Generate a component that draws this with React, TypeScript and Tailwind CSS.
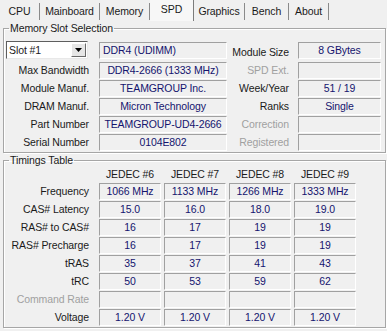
import React from "react";

const tabs = [
  { name: "CPU", w: "w-[40px]" },
  { name: "Mainboard", w: "w-[60px]" },
  { name: "Memory", w: "w-[50px]" },
  { name: "SPD", w: "w-[44px]", active: true },
  { name: "Graphics", w: "w-[51px]" },
  { name: "Bench", w: "w-[44px]" },
  { name: "About", w: "w-[40px]" },
];

const slotRows = [
  ["Max Bandwidth", "DDR4-2666 (1333 MHz)", "SPD Ext.", ""],
  ["Module Manuf.", "TEAMGROUP Inc.", "Week/Year", "51 / 19"],
  ["DRAM Manuf.", "Micron Technology", "Ranks", "Single"],
  ["Part Number", "TEAMGROUP-UD4-2666", "Correction", ""],
  ["Serial Number", "0104E802", "Registered", ""],
];

const dimmed = ["SPD Ext.", "Correction", "Registered", "Command Rate"];

const timings: [string, string[]][] = [
  ["Frequency", ["1066 MHz", "1133 MHz", "1266 MHz", "1333 MHz"]],
  ["CAS# Latency", ["15.0", "16.0", "18.0", "19.0"]],
  ["RAS# to CAS#", ["16", "17", "19", "19"]],
  ["RAS# Precharge", ["16", "17", "19", "19"]],
  ["tRAS", ["35", "37", "41", "43"]],
  ["tRC", ["50", "53", "59", "62"]],
  ["Command Rate", ["", "", "", ""]],
  ["Voltage", ["1.20 V", "1.20 V", "1.20 V", "1.20 V"]],
];

const Field = ({ value, w }: { value: string; w: string }) => (
  <div
    className={`${w} h-[17px] flex items-center justify-center whitespace-nowrap border border-t-[#a0a0a0] border-l-[#a0a0a0] border-b-[#ffffff] border-r-[#ffffff] bg-[#f0f0f0] text-[#14146e] leading-none`}
  >
    {value}
  </div>
);

const Label = ({ text, w }: { text: string; w: string }) => (
  <div
    className={`${w} text-right whitespace-nowrap leading-none ${
      dimmed.includes(text) ? "text-[#a0a0a0]" : "text-[#1a1a1a]"
    }`}
  >
    {text}
  </div>
);

export default function App() {
  return (
    <div
      className="w-[387px] h-[331px] bg-[#f0f0f0] text-[10.5px] tracking-[-0.1px] overflow-hidden"
      style={{ fontFamily: '"Liberation Sans", Arial, sans-serif' }}
    >
      {/* tab strip */}
      <div className="h-[20px] flex items-end">
        {tabs.map((t) =>
          t.active ? (
            <div
              key={t.name}
              className={`${t.w} h-[21px] -mb-px flex items-center justify-center bg-[#f7f7f7] border-r border-r-[#7c7c7c] text-[#1a1a1a] pb-[2px]`}
            >
              {t.name}
            </div>
          ) : (
            <div
              key={t.name}
              className={`${t.w} h-[17px] flex items-center justify-center border-r border-r-[#8a8a8a] text-[#1a1a1a]`}
            >
              {t.name}
            </div>
          )
        )}
      </div>

      {/* Memory Slot Selection */}
      <fieldset className="ml-[3px] mt-[2px] w-[383px] h-[131px] border border-[#a6a6a6] shadow-[inset_1px_1px_0_#ffffff,1px_1px_0_#ffffff]">
        <legend className="ml-[5px] px-px leading-[13px] text-[#1a1a1a]">
          Memory Slot Selection
        </legend>
        <div className="flex items-center mt-[6px] h-[18px]">
          <div className="ml-[2px] w-[82px] h-[18px] flex items-center bg-white border border-t-[#5e5e5e] border-l-[#5e5e5e] border-b-[#e8e8e8] border-r-[#e8e8e8] text-[#1a1a1a]">
            <span className="pl-[2px] flex-1 leading-none">Slot #1</span>
            <div className="w-[15px] h-[14px] mr-px flex items-center justify-center bg-[#e6e6e6] border border-t-[#ffffff] border-l-[#ffffff] border-b-[#6a6a6a] border-r-[#6a6a6a]">
              <svg width="7" height="4" viewBox="0 0 7 4">
                <path d="M0 0h7L3.5 4z" fill="#000" />
              </svg>
            </div>
          </div>
          <div className="ml-[11px]">
            <div className="w-[128px] h-[17px] flex items-center pl-[3px] whitespace-nowrap border border-t-[#a0a0a0] border-l-[#a0a0a0] border-b-[#ffffff] border-r-[#ffffff] text-[#14146e] leading-none">
              DDR4 (UDIMM)
            </div>
          </div>
          <div className="w-[62px] text-right leading-none text-[#1a1a1a] pt-[4px]">
            Module Size
          </div>
          <div className="ml-[9px]">
            <Field value="8 GBytes" w="w-[83px]" />
          </div>
        </div>
        <div className="mt-[3px] flex flex-col gap-px">
          {slotRows.map(([l, v, l2, v2]) => (
            <div key={l} className="flex items-center h-[17px]">
              <Label text={l} w="w-[85px]" />
              <div className="ml-[10px]">
                <Field value={v} w="w-[128px]" />
              </div>
              <Label text={l2} w="w-[62px]" />
              <div className="ml-[9px]">
                <Field value={v2} w="w-[83px]" />
              </div>
            </div>
          ))}
        </div>
      </fieldset>

      {/* Timings Table */}
      <fieldset className="ml-[3px] mt-[1px] w-[383px] h-[174px] border border-[#a6a6a6] shadow-[inset_1px_1px_0_#ffffff,1px_1px_0_#ffffff]">
        <legend className="ml-[5px] px-px leading-[13px] text-[#1a1a1a]">
          Timings Table
        </legend>
        <div className="flex h-[14px] items-center">
          <div className="w-[85px]" />
          <div className="ml-[10px] flex gap-[3px] text-[#1a1a1a] leading-none">
            {["JEDEC #6", "JEDEC #7", "JEDEC #8", "JEDEC #9"].map((j) => (
              <div key={j} className="w-[62px] text-center whitespace-nowrap">
                {j}
              </div>
            ))}
          </div>
        </div>
        <div className="mt-[2px] flex flex-col gap-px">
          {timings.map(([l, vals]) => (
            <div key={l} className="flex items-center h-[17px]">
              <Label text={l} w="w-[85px]" />
              <div className="ml-[10px] flex gap-[3px]">
                {vals.map((v, i) => (
                  <Field key={i} value={v} w="w-[62px]" />
                ))}
              </div>
            </div>
          ))}
        </div>
      </fieldset>
    </div>
  );
}
